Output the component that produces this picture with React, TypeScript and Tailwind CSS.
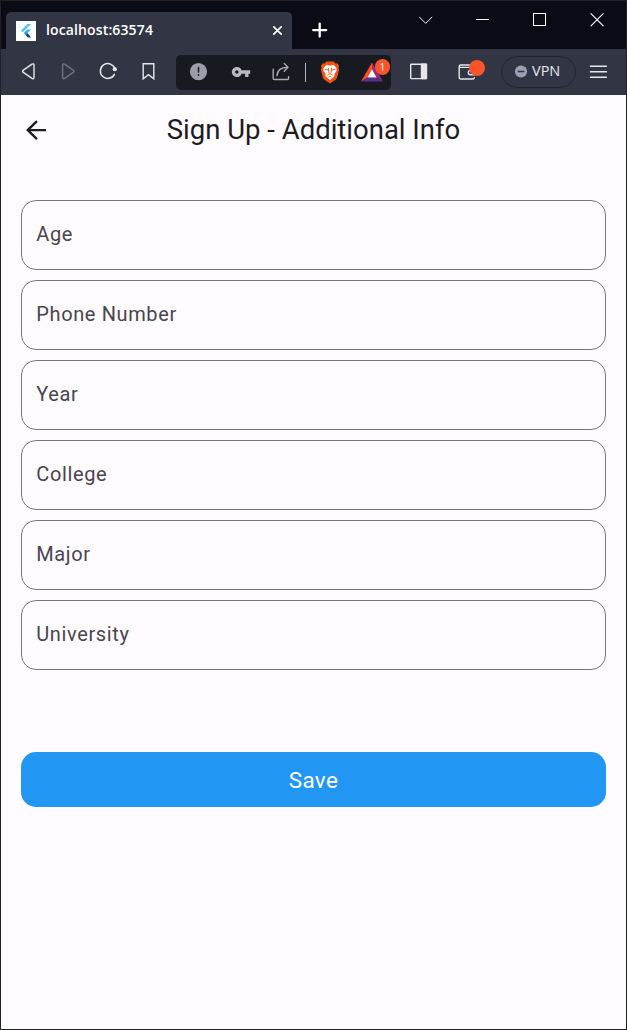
import type { ReactNode } from "react";
import { MdVpnKey } from "react-icons/md";

const fields = ["Age", "Phone Number", "Year", "College", "Major", "University"];

function Icon({ children, className = "" }: { children: ReactNode; className?: string }) {
  return (
    <svg
      viewBox="0 0 24 24"
      className={`h-6 w-6 shrink-0 ${className}`}
      fill="none"
      stroke="currentColor"
      strokeWidth="1.4"
      strokeLinejoin="round"
      strokeLinecap="round"
    >
      {children}
    </svg>
  );
}

function FlutterIcon() {
  return (
    <svg viewBox="0 0 20 20" className="h-5 w-5 shrink-0 bg-white">
      <path d="M11.5 3h3.6L6.8 11.3 5 9.5z" fill="#54c5f8" />
      <path d="M11.6 8.6h3.5l-4.2 4.2-2.7-1.2z" fill="#41b4ec" />
      <path d="M7.9 12.2l1.8-1.8 1.9 1.8-1.9 1.9z" fill="#2998dc" />
      <path d="M9.7 14.1l1.9-1.9 3.5 4.2h-3.2z" fill="#01418f" />
    </svg>
  );
}

function BraveIcon() {
  return (
    <svg viewBox="0 0 20 23" className="h-[23px] w-5 shrink-0">
      <path
        d="M6.3.6h7.4l1.7 1.8 1.8-.1 1.9 2.6-.6 1.7.7 2.1-2 7.6q-.4 1.5-1.7 2.4L10 22.6l-5.5-3.9q-1.3-.9-1.7-2.4l-2-7.6.7-2.1-.6-1.7 1.9-2.6 1.8.1z"
        fill="#f4510e"
      />
      <path
        d="M6.2 3.9l3.8.7 3.8-.7 2.9 3.3-.4 1.2.5 1.2-2.4 3.3.2 2.2-1.6 1.5-3 2.4-3-2.4-1.6-1.5.2-2.2-2.4-3.3.5-1.2-.4-1.2z"
        fill="#fff"
      />
      <path
        d="M4.8 8.2l3.4.9M15.2 8.2l-3.4.9M8.6 6.7l-.2 2.4.8 3.3M11.4 6.7l.2 2.4-.8 3.3M7.3 14l2.7-1.2 2.7 1.2M8.4 16.2l1.6-1.1 1.6 1.1"
        fill="none"
        stroke="#f4510e"
        strokeWidth="0.9"
      />
    </svg>
  );
}

function TitleBar() {
  return (
    <div className="flex h-12 shrink-0 bg-[#0a0b15] pl-[5px]">
      <div className="mt-[11px] flex h-[37px] w-[286px] items-center rounded-t-[5px] bg-[#323543] pl-[10px] pr-[3px]">
        <FlutterIcon />
        <span className="-mt-0.5 ml-[10px] flex-1 font-['Open_Sans','Noto_Sans',sans-serif] text-[14px] font-semibold leading-5 tracking-[0.13px] text-white">
          localhost:63574
        </span>
        <Icon className="text-white">
          <path d="M8.8 7.8l7.4 7.4M16.2 7.8l-7.4 7.4" strokeWidth="1.7" />
        </Icon>
      </div>
      <div className="ml-[15px] mt-[17px]">
        <Icon className="text-white">
          <path d="M12.7 5.6v13M6.2 12.1h13" strokeWidth="2.3" />
        </Icon>
      </div>
      <div className="ml-auto mr-[17px] mt-[7px] flex gap-[33.5px] text-white">
        <Icon>
          <path d="M6.5 9.2l6.2 6.2 6.2-6.2" strokeWidth="1" />
        </Icon>
        <Icon>
          <path d="M5.5 11.5h13" strokeWidth="1" strokeLinecap="butt" shapeRendering="crispEdges" />
        </Icon>
        <Icon>
          <rect x="5.5" y="5.5" width="12" height="12" strokeWidth="1" strokeLinejoin="miter" shapeRendering="crispEdges" />
        </Icon>
        <Icon>
          <path d="M6 5.6l12.2 12.2M18.2 5.6L6 17.8" strokeWidth="1.1" />
        </Icon>
      </div>
    </div>
  );
}

function AddressActions() {
  return (
    <div className="flex h-[35px] w-[215px] items-center rounded-[5px] bg-[#181a21] pl-[10px]">
      <Icon className="text-[#9b9ea8]">
        <circle cx="12.5" cy="11.6" r="8.6" fill="currentColor" stroke="none" />
        <path d="M12.5 7.6v4.4M12.5 14.9v.3" stroke="#1c1f28" strokeWidth="1.6" />
      </Icon>
      <MdVpnKey className="-mt-px ml-[21px] h-5 w-5 text-[#b9bac0]" />
      <Icon className="ml-[18px] text-[#a9aab0]">
        <path d="M4.2 9.2v9.1q0 1.2 1.2 1.2h13q1.2 0 1.2-1.2v-1.6" />
        <path d="M8 15.8c.3-5.2 3.6-8.4 10.7-8.5M15.2 3.6l3.8 3.7-3.8 3.9" />
      </Icon>
      <div className="ml-[12px] h-[19px] w-px bg-[#b5b6bc]" />
      <div className="ml-[14px]">
        <BraveIcon />
      </div>
      <div className="relative ml-[20px] h-6 w-6">
        <svg viewBox="0 0 24 24" className="h-6 w-6">
          <path d="M12 2.5L1 21.5l6.6-4L12 9.5z" fill="#ff4f24" />
          <path d="M12 2.5l11 19-6.6-4L12 9.5z" fill="#9e2a77" />
          <path d="M1 21.5h22l-6.6-4H7.6z" fill="#5b2d91" />
          <path d="M12 9.2l4.6 8.3H7.4z" fill="#fff" />
        </svg>
        <span className="absolute -top-px left-[14.5px] grid h-[15.5px] w-[15.5px] place-items-center rounded-full bg-[#fb542b] font-['Open_Sans',sans-serif] text-[10px] leading-none text-white">
          1
        </span>
      </div>
    </div>
  );
}

function Toolbar() {
  return (
    <div className="flex h-[46px] shrink-0 items-center bg-[#323543] pl-[15px] text-[#e6e7ee]">
      <div className="flex gap-4">
        <Icon>
          <path d="M7 10.4L16 4.2q2-1 2 1.1v12q0 2.1-2 1.1l-9-6.2q-1-.9 0-1.8z" />
        </Icon>
        <Icon className="text-[#70737e]">
          <path d="M17.6 10.4L8.6 4.2q-2-1-2 1.1v12q0 2.1 2 1.1l9-6.2q1-.9 0-1.8z" />
        </Icon>
        <Icon>
          <path d="M18.9 9.1a7.4 7.4 0 1 0-.5 5.2" strokeWidth="1.5" />
          <circle cx="18.8" cy="9.2" r="2.1" fill="currentColor" stroke="none" />
        </Icon>
        <Icon>
          <path d="M7.2 3.7h10.6v15.1l-5.3-4.1-5.3 4.1z" strokeLinejoin="miter" />
        </Icon>
      </div>
      <div className="ml-4">
        <AddressActions />
      </div>
      <Icon className="ml-[15px]">
        <rect x="4.7" y="4.2" width="15.6" height="14.4" rx="0.5" />
        <path d="M15.5 4.2h5v14.4h-5z" fill="currentColor" />
      </Icon>
      <div className="relative ml-[25px] h-6 w-6">
        <Icon>
          <path d="M19 8V6.5q0-1.5-1.5-1.5H5.8Q4.2 5 4.2 6.4v11.2q0 1.4 1.4 1.4H18q1.4 0 1.4-1.4M4.5 7.4H17" />
          <path d="M19.5 10.4h-4q-2.2 0-2.2 2.2t2.2 2.2h4z" />
        </Icon>
        <span className="absolute left-[14px] top-0 h-[15.5px] w-[15.5px] rounded-full bg-[#fb542b]" />
      </div>
      <div className="-mt-px ml-[22px] flex h-8 w-[75px] items-center rounded-full border border-[#222531] pl-[6px]">
        <svg viewBox="0 0 24 24" className="h-6 w-6">
          <circle cx="13" cy="11.5" r="6.1" fill="#9b9fb4" />
          <path d="M9.7 11.5h6.6" stroke="#323543" strokeWidth="1.5" />
        </svg>
        <span className="-mt-0.5 font-['Open_Sans','Noto_Sans',sans-serif] text-[14.5px] leading-5 text-[#e6e7ee]">
          VPN
        </span>
      </div>
      <Icon className="ml-[10px]">
        <path d="M4.4 6.2h16M4.4 11.7h16M4.4 17.2h16" />
      </Icon>
    </div>
  );
}

export default function App() {
  return (
    <div className="flex h-[1030px] w-[627px] flex-col overflow-hidden border border-[#222127] bg-[#fffbff] font-[Roboto,sans-serif]">
      <div className="-mt-px flex h-px shrink-0 justify-center bg-[#222328] pr-[63px]">
        <div className="h-px w-[60px] bg-[#2478b8]" />
      </div>
      <TitleBar />
      <Toolbar />
      <main className="flex flex-1 flex-col px-5">
        <header className="flex h-[70px] items-center">
          <button aria-label="Back" className="-ml-px grid h-8 w-8 place-items-center">
            <svg viewBox="0 0 24 24" className="h-[30px] w-[30px]" fill="#1c1b1f">
              <path d="M20 11.1H7.7l5.7-5.6L12.1 4.1 4 12l8.1 7.9 1.3-1.4-5.7-5.6H20z" />
            </svg>
          </button>
          <h1 className="-mt-0.5 mr-[31px] flex-1 text-center text-[27.5px] leading-[35px] text-[#1c1b1f]">
            Sign Up - Additional Info
          </h1>
        </header>
        <form className="mt-[35px] flex flex-col gap-[10px]">
          {fields.map((label) => (
            <label
              key={label}
              className="flex h-[70px] rounded-[15px] border border-[#7a747e] pl-[14.25px] pt-[20px] text-[20px] leading-[26px] tracking-[0.625px] text-[#49454f]"
            >
              {label}
            </label>
          ))}
          <button
            type="button"
            className="mt-[72.4px] h-[55px] rounded-[15px] bg-[#2196f3] text-[22.5px] font-[450] leading-[30px] tracking-[0.3px] text-white"
          >
            Save
          </button>
        </form>
      </main>
    </div>
  );
}
